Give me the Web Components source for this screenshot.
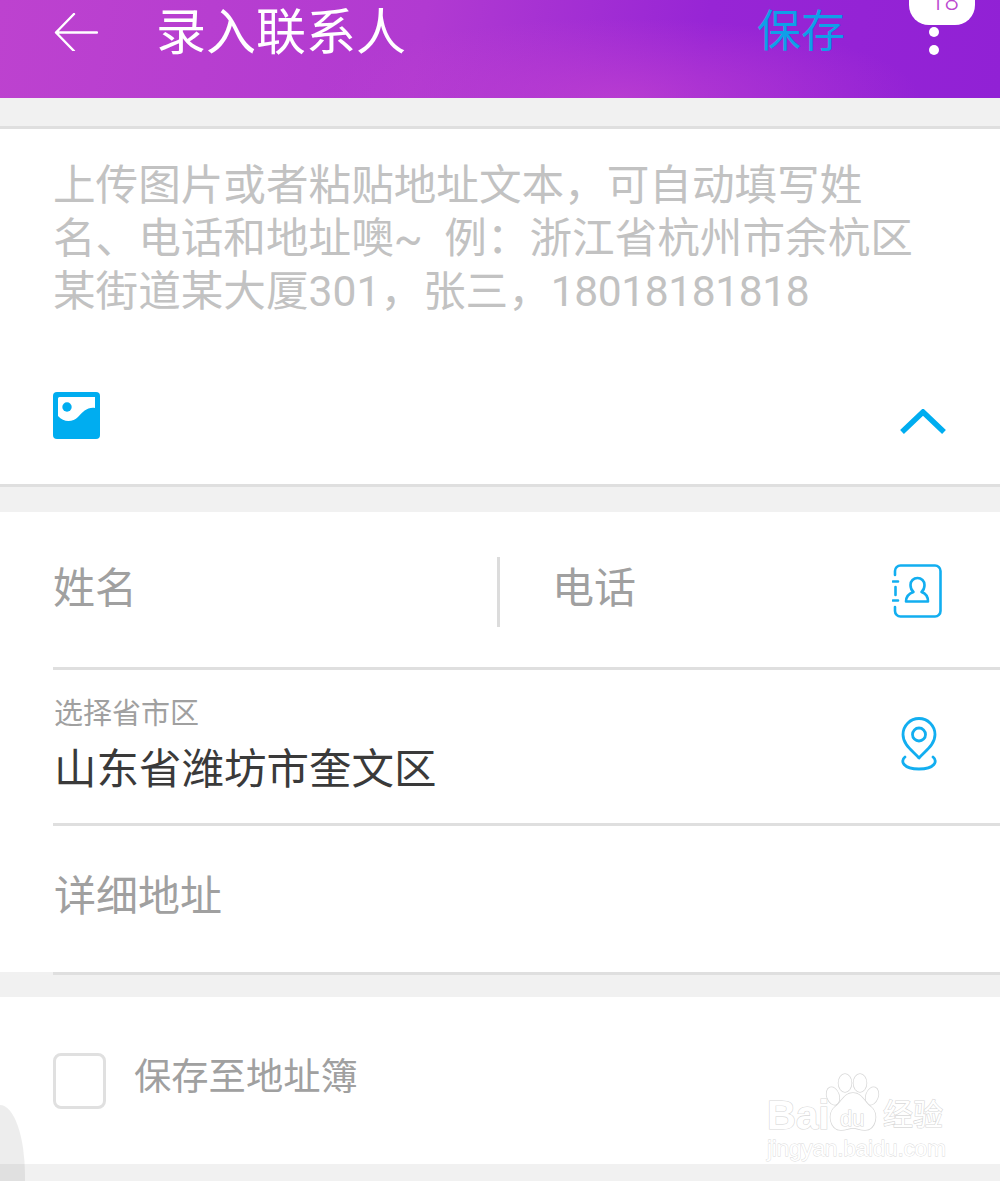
<!DOCTYPE html>
<html lang="zh">
<head>
<meta charset="utf-8">
<title>录入联系人</title>
<style>
html, body {
  margin: 0;
  height: 1181px;
  overflow: hidden;
  background: #f1f1f1;
  font-family: Roboto, "Noto Sans CJK SC", sans-serif;
}
.tilde-gap { margin-right: 11px; }
.digits { letter-spacing: -.45px; }
</style>
</head>
<body>
<app-bar title="录入联系人" action="保存" badge="18"></app-bar>
<paste-card>上传图片或者粘贴地址文本，可自动填写姓<br>名、电话和地址噢<span class="tilde-gap">~</span> 例：浙江省杭州市余杭区<br>某街道某大厦301，张三，<span class="digits">18018181818</span></paste-card>
<contact-form></contact-form>
<save-row>保存至地址簿</save-row>
<edge-handle></edge-handle>
<baidu-mark></baidu-mark>

<script>
'use strict';

class AppBar extends HTMLElement {
  constructor() {
    super();
    const shadowRoot = this.attachShadow({mode: 'open'});
    shadowRoot.innerHTML = `
<style>
:host {
  display: flex;
  align-items: flex-start;
  height: 98px;
  box-sizing: border-box;
  padding-left: 54px;
  overflow: hidden;
  color: #fff;
  background:
    radial-gradient(ellipse 300px 80px at 620px 98px, rgba(194,66,208,.7), rgba(194,66,208,0)),
    linear-gradient(100deg, #bd42cf 0%, #b13ad1 42%, #9725d5 70%, #9121d5 100%);
}
.back { width: 44px; height: 38px; margin-top: 13px; flex: none; }
.title {
  margin-left: 58px;
  margin-top: -2px;
  font-size: 50px;
  line-height: 70px;
  flex: 1;
}
.action {
  font-size: 44px;
  line-height: 64px;
  color: #0f9fe8;
}
.more {
  width: 66px;
  margin: 0 25px 0 64px;
  display: flex;
  flex-direction: column;
  align-items: center;
  flex: none;
}
.badge {
  width: 66px;
  height: 25px;
  background: #fff;
  border-radius: 0 0 20px 20px;
  color: #bb47cf;
  font-size: 26px;
  font-weight: 300;
  line-height: 1;
  text-align: center;
  overflow: hidden;
}
.badge span { display: block; margin: -12px 0 0 5px; }
.dot {
  width: 10px;
  height: 10px;
  margin: 2px 16px 0 0;
  background: #fff;
  border-radius: 50%;
}
.dot + .dot { margin-top: 8px; }
</style>
<svg class="back" viewBox="0 0 44 38" fill="none" stroke="#fff" stroke-width="2.4" stroke-linecap="round" stroke-linejoin="round">
  <path d="M20 1 L2 19.500 L20 38 M2 19.500 H43"/>
</svg>
<div class="title"></div>
<div class="action"></div>
<div class="more">
  <div class="badge"><span></span></div>
  <div class="dot"></div>
  <div class="dot"></div>
</div>
`;
    shadowRoot.querySelector('.title').textContent = this.getAttribute('title');
    shadowRoot.querySelector('.action').textContent = this.getAttribute('action');
    shadowRoot.querySelector('.badge span').textContent = this.getAttribute('badge');
  }
}

class PasteCard extends HTMLElement {
  constructor() {
    super();
    const shadowRoot = this.attachShadow({mode: 'open'});
    shadowRoot.innerHTML = `
<style>
:host {
  display: block;
  margin-top: 28px;
  height: 361px;
  box-sizing: border-box;
  padding: 30px 54px 0 53px;
  background: #fff;
  border-top: 3px solid #dfdfdf;
  border-bottom: 3px solid #dfdfdf;
}
.hint {
  height: 233px;
  font-size: 42.600px;
  line-height: 53px;
  white-space: nowrap;
  color: #c2c2c2;
}
.tools {
  display: flex;
  align-items: center;
  justify-content: space-between;
}
svg { display: block; }
.up { margin-top: 12px; }
</style>
<div class="hint"><slot></slot></div>
<div class="tools">
  <svg width="47" height="47" viewBox="0 0 47 47">
    <rect width="47" height="47" rx="4" fill="#00adf0"/>
    <path d="M6.500 5 H42 V16 C34 15 30 20 25 25 C20 30 11 31 5 24 V6.500 A1.500 1.500 0 0 1 6.500 5 Z" fill="#fff"/>
    <circle cx="14" cy="15" r="4.700" fill="#00adf0"/>
  </svg>
  <svg class="up" width="46" height="26" viewBox="0 0 46 26" fill="none" stroke="#00adf0" stroke-width="5.500">
    <path d="M2 23 L23 3 L44 23"/>
  </svg>
</div>
`;
  }
}

class FormRow extends HTMLElement {
  constructor() {
    super();
    const shadowRoot = this.attachShadow({mode: 'open'});
    shadowRoot.innerHTML = `
<style>
:host {
  display: flex;
  align-items: center;
  margin-left: 53px;
  border-bottom: 3px solid #dfdfdf;
}
</style>
<slot></slot>
`;
  }
}

class ContactForm extends HTMLElement {
  constructor() {
    super();
    const shadowRoot = this.attachShadow({mode: 'open'});
    shadowRoot.innerHTML = `
<style>
:host {
  display: block;
  margin-top: 25px;
  height: 460px;
  background: #fff;
}
.name { height: 155px; }
.addr { height: 153px; }
.detail { height: 146px; }
.ph {
  font-size: 42px;
  line-height: 60px;
  color: #a0a0a0;
}
.name .ph { margin-top: -2px; }
.left { width: 444px; }
.sep { width: 3px; height: 70px; background: #dcdcdc; margin-top: 4px; }
.right { flex: 1; margin-left: 52px; }
.book { margin-right: 58px; margin-top: 2px; }
.stack { flex: 1; padding-left: 1px; }
.label { font-size: 29px; line-height: 40px; color: #a0a0a0; margin-top: 1px; }
.value { font-size: 42.500px; line-height: 62px; color: #3a3a3a; margin-top: 5px; }
.pin { margin-right: 62px; margin-bottom: 6px; }
.detail .ph { margin-left: 1px; margin-top: -4px; }
svg { display: block; flex: none; }
</style>
<form-row class="name">
  <div class="ph left">姓名</div>
  <div class="sep"></div>
  <div class="ph right">电话</div>
  <svg class="book" width="50" height="54" viewBox="0 0 50 54" fill="none" stroke="#12aef0" stroke-width="2.600" stroke-linecap="round" stroke-linejoin="round">
    <path d="M3 11 V7 A5.500 5.500 0 0 1 8.500 1.500 H43 A5.500 5.500 0 0 1 48.500 7 V47 A5.500 5.500 0 0 1 43 52.500 H8.500 A5.500 5.500 0 0 1 3 47 V43"/>
    <path d="M1 17.500 H6 M3.500 23 V31 M1 36.500 H6"/>
    <path d="M14 37.500 H36 C36 33 34 29.500 29.500 28 C32 26 32.500 23.500 32.500 21 C32.500 17 29.500 14 25.500 14 C21.500 14 18.500 17 18.500 21 C18.500 23.500 19 26 21.500 28 C17 29.500 14 33 14 37.500 Z"/>
  </svg>
</form-row>
<form-row class="addr">
  <div class="stack">
    <div class="label">选择省市区</div>
    <div class="value">山东省潍坊市奎文区</div>
  </div>
  <svg class="pin" width="38" height="54" viewBox="0 0 38 54" fill="none" stroke="#12aef0" stroke-width="2.800" stroke-linecap="round" stroke-linejoin="round">
    <path d="M19 41 C13 34 3 28 3 17.500 A16 16 0 0 1 35 17.500 C35 28 25 34 19 41 Z"/>
    <circle cx="19" cy="17.500" r="6.500"/>
    <path d="M5 40 C0 44 3 52 19 52 C35 52 38 44 33 40"/>
  </svg>
</form-row>
<form-row class="detail">
  <div class="ph">详细地址</div>
</form-row>
`;
  }
}

class SaveRow extends HTMLElement {
  constructor() {
    super();
    const shadowRoot = this.attachShadow({mode: 'open'});
    shadowRoot.innerHTML = `
<style>
:host {
  display: flex;
  align-items: center;
  gap: 28px;
  margin-top: 25px;
  height: 167px;
  box-sizing: border-box;
  padding-left: 53px;
  background: #fff;
  font-size: 37.300px;
  color: #a0a0a0;
}
.box {
  width: 53px;
  height: 56px;
  box-sizing: border-box;
  border: 3px solid #e0e0e0;
  border-radius: 8px;
  flex: none;
}
.text { margin-top: -14px; }
</style>
<div class="box"></div>
<div class="text"><slot></slot></div>
`;
  }
}

// half-hidden floating handle on the left edge, lies over the page
class EdgeHandle extends HTMLElement {
  constructor() {
    super();
    const shadowRoot = this.attachShadow({mode: 'open'});
    shadowRoot.innerHTML = `
<style>
:host {
  position: absolute;
  left: 0;
  top: 1105px;
  width: 25px;
  height: 76px;
  border-radius: 0 25px 0 0 / 0 70px 0 0;
  background: rgba(0, 0, 0, .07);
}
</style>
`;
  }
}

class BaiduMark extends HTMLElement {
  constructor() {
    super();
    const shadowRoot = this.attachShadow({mode: 'open'});
    shadowRoot.innerHTML = `
<style>
:host {
  position: absolute;
  left: 766px;
  top: 1072px;
  width: 190px;
  height: 90px;
  color: #fff;
  font-family: "Liberation Sans", "Noto Sans CJK SC", sans-serif;
  -webkit-text-stroke: 1.200px #d8d8d8;
  paint-order: stroke fill;
}
span { position: absolute; white-space: nowrap; }
.bai { left: 1px; top: 27px; font-size: 40px; font-weight: 700; line-height: 32px; }
.du { left: 74px; top: 36px; font-size: 22px; line-height: 22px; }
.jy { left: 117px; top: 26px; font-size: 30px; line-height: 34px; }
.url { left: 1px; top: 63px; font-size: 22.800px; line-height: 26px; -webkit-text-stroke-width: .8px; letter-spacing: -.3px; }
svg { position: absolute; left: 50px; top: 0; }
</style>
<svg width="70" height="62" viewBox="0 0 70 62" fill="#fff" stroke="#d8d8d8" stroke-width="1.500">
  <ellipse cx="17" cy="24" rx="6" ry="9" transform="rotate(-20 17 24)"/>
  <ellipse cx="29" cy="11" rx="6.500" ry="9"/>
  <ellipse cx="44" cy="11" rx="6.500" ry="9"/>
  <ellipse cx="56" cy="24" rx="6" ry="9" transform="rotate(20 56 24)"/>
  <path d="M37 21 C46 21 48 30 55 35 C63 41 60 58 49 58 C44 58 41 56 37 56 C33 56 30 58 25 58 C14 58 11 41 19 35 C26 30 28 21 37 21 Z"/>
</svg>
<span class="bai">Bai</span>
<span class="du">du</span>
<span class="jy">经验</span>
<span class="url">jingyan.baidu.com</span>
`;
  }
}

customElements.define('app-bar', AppBar);
customElements.define('paste-card', PasteCard);
customElements.define('form-row', FormRow);
customElements.define('contact-form', ContactForm);
customElements.define('save-row', SaveRow);
customElements.define('edge-handle', EdgeHandle);
customElements.define('baidu-mark', BaiduMark);
</script>
</body>
</html>
